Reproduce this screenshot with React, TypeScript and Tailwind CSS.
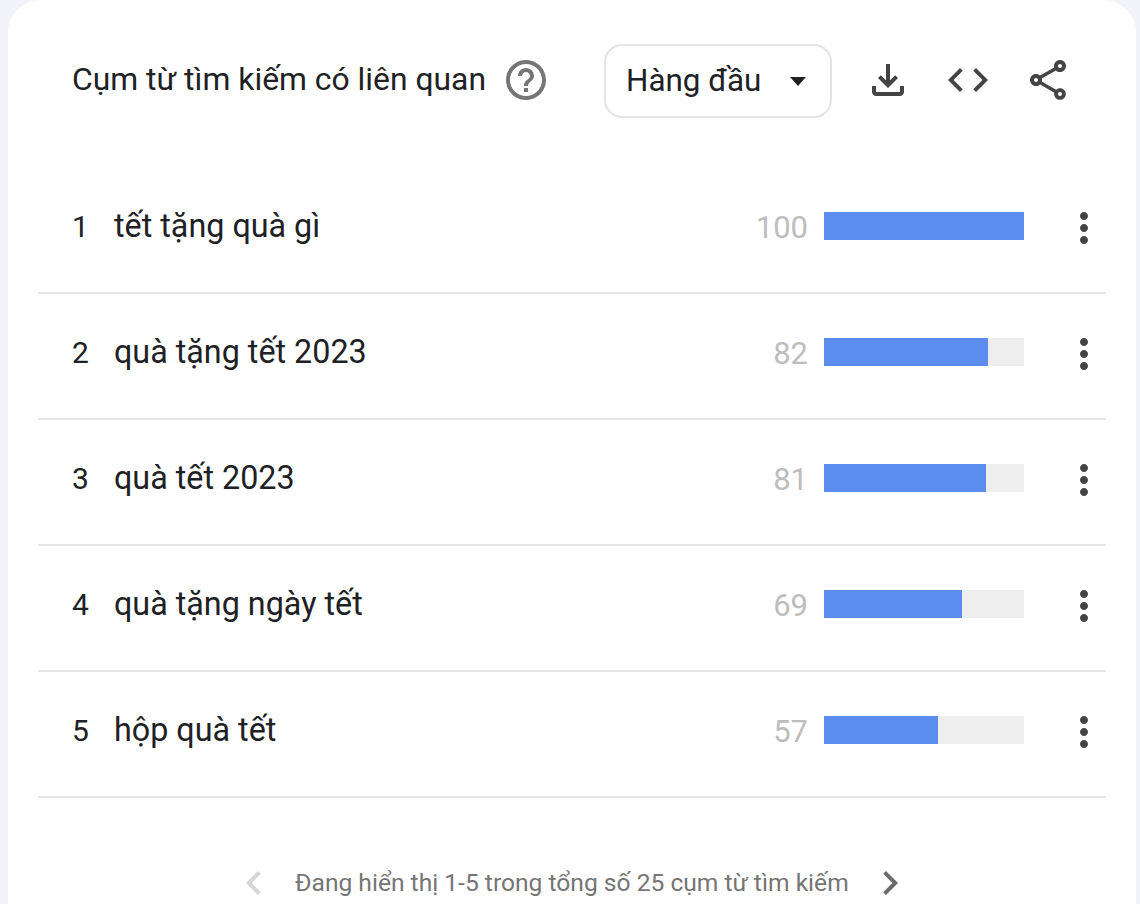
const font = { fontFamily: '"Roboto", sans-serif' };

const rows = [
  { rank: 1, term: 'tết tặng quà gì', value: 100 },
  { rank: 2, term: 'quà tặng tết 2023', value: 82 },
  { rank: 3, term: 'quà tết 2023', value: 81 },
  { rank: 4, term: 'quà tặng ngày tết', value: 69 },
  { rank: 5, term: 'hộp quà tết', value: 57 },
];

function Icon({ d, className }: { d: string; className: string }) {
  return (
    <svg viewBox="0 0 24 24" className={className} fill="currentColor">
      <path d={d} />
    </svg>
  );
}

const helpPath =
  'M11 18h2v-2h-2v2zm1-16C6.48 2 2 6.48 2 12s4.48 10 10 10 10-4.48 10-10S17.52 2 12 2zm0 18c-4.41 0-8-3.59-8-8s3.59-8 8-8 8 3.59 8 8-3.59 8-8 8zm0-14c-2.21 0-4 1.79-4 4h2c0-1.1.9-2 2-2s2 .9 2 2c0 2-3 1.75-3 5h2c0-2.25 3-2.5 3-5 0-2.21-1.79-4-4-4z';
const downloadPath =
  'M18 15v3H6v-3H4v3c0 1.1.9 2 2 2h12c1.1 0 2-.9 2-2v-3h-2zm-1-4l-1.41-1.41L13 12.17V4h-2v8.17L8.41 9.59 7 11l5 5 5-5z';
const codePath =
  'M9.4 16.6L4.8 12l4.6-4.6L8 6l-6 6 6 6 1.4-1.4zm5.2 0l4.6-4.6-4.6-4.6L16 6l6 6-6 6-1.4-1.4z';
const sharePath =
  'M18 16.08c-.76 0-1.44.3-1.96.77L8.91 12.7c.05-.23.09-.46.09-.7s-.04-.47-.09-.7l7.05-4.11c.54.5 1.25.81 2.04.81 1.66 0 3-1.34 3-3s-1.34-3-3-3-3 1.34-3 3c0 .24.04.47.09.7L8.04 9.81C7.5 9.31 6.79 9 6 9c-1.66 0-3 1.34-3 3s1.34 3 3 3c.79 0 1.5-.31 2.04-.81l7.12 4.16c-.05.21-.08.43-.08.65 0 1.61 1.31 2.92 2.92 2.92s2.92-1.31 2.92-2.92c0-1.61-1.31-2.92-2.92-2.92zM18 4c.55 0 1 .45 1 1s-.45 1-1 1-1-.45-1-1 .45-1 1-1zM6 13c-.55 0-1-.45-1-1s.45-1 1-1 1 .45 1 1-.45 1-1 1zm12 7.02c-.55 0-1-.45-1-1s.45-1 1-1 1 .45 1 1-.45 1-1 1z';
const morePath =
  'M12 8c1.1 0 2-.9 2-2s-.9-2-2-2-2 .9-2 2 .9 2 2 2zm0 2c-1.1 0-2 .9-2 2s.9 2 2 2 2-.9 2-2-.9-2-2-2zm0 6c-1.1 0-2 .9-2 2s.9 2 2 2 2-.9 2-2-.9-2-2-2z';
const leftPath = 'M15.41 7.41L14 6l-6 6 6 6 1.41-1.41L10.83 12z';
const rightPath = 'M10 6L8.59 7.41 13.17 12l-4.58 4.59L10 18l6-6z';

export default function App() {
  return (
    <div className="h-[904px] overflow-hidden bg-[#f1f3f8] pl-2 pr-1" style={font}>
      <div className="h-full bg-white rounded-t-[32px]">
        {/* Header */}
        <div className="flex items-center h-[160px] pl-[64px]">
          <h2 className="text-[31.85px] font-normal text-[#202124] w-[410px] whitespace-nowrap">Cụm từ tìm kiếm có liên quan</h2>
          <Icon d={helpPath} className="w-12 h-12 ml-[20px] text-[#757575]" />
          <div className="ml-[54px] mt-[2px] flex items-center justify-between w-[228px] h-[74px] pl-[20px] pr-[24px] border-2 border-[#e4e4e4] rounded-[18px]">
            <span className="text-[31.4px] text-[#202124]">Hàng đầu</span>
            <span className="w-0 h-0 border-x-[8px] border-x-transparent border-t-[9px] border-t-[#202124]" />
          </div>
          <div className="ml-[32px] flex gap-8 text-[#444444]">
            <Icon d={downloadPath} className="w-12 h-12" />
            <Icon d={codePath} className="w-12 h-12" />
            <Icon d={sharePath} className="w-12 h-12" />
          </div>
        </div>

        {/* Rows */}
        <div className="mx-[30px] mt-[8px]">
          {rows.map((r) => (
            <div key={r.rank} className="flex items-center h-[126px] pl-[34px] pb-[8px] border-b-2 border-[#e4e4e4]">
              <span className="w-[42px] text-[30px] text-[#202124]">{r.rank}</span>
              <span className="flex-1 text-[32.3px] text-[#202124]">{r.term}</span>
              <span className="mt-[4px] text-[31px] text-[#bdbdbd]">{r.value}</span>
              <div className="ml-[16px] w-[200px] h-[28px] bg-[#eeeeee]">
                <div className="h-full bg-[#5a8dee]" style={{ width: `${r.value}%` }} />
              </div>
              <Icon d={morePath} className="w-12 h-12 ml-[36px] mr-[-2px] mt-[4px] text-[#444444]" />
            </div>
          ))}
        </div>

        {/* Pagination */}
        <div className="flex items-center mt-[61px] pl-[222px]">
          <Icon d={leftPath} className="w-12 h-12 text-[#d6d6d6]" />
          <span className="ml-[17px] text-[24.6px] text-[#757575] whitespace-nowrap">Đang hiển thị 1-5 trong tổng số 25 cụm từ tìm kiếm</span>
          <Icon d={rightPath} className="w-12 h-12 ml-[17px] text-[#6b6b6b]" />
        </div>
      </div>
    </div>
  );
}
